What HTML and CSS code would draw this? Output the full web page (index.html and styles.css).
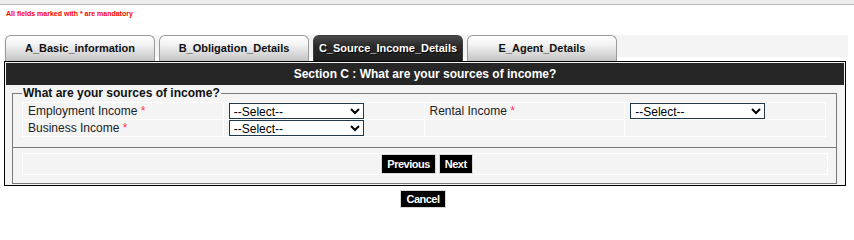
FILE: index.html
```html
<!DOCTYPE html>
<html>
<head>
<meta charset="utf-8">
<link rel="stylesheet" href="styles.css">
</head>
<body>
<div class="topbar"></div>
<div class="notice">All fields marked with * are mandatory</div>
<div class="tabs">
  <div class="tab">A_Basic_information</div>
  <div class="tab">B_Obligation_Details</div>
  <div class="tab active">C_Source_Income_Details</div>
  <div class="tab">E_Agent_Details</div>
</div>
<div class="panel">
  <div class="panel-head">Section C : What are your sources of income?</div>
  <div class="panel-body">
    <fieldset class="group">
      <legend>What are your sources of income?</legend>
      <table class="grid">
        <tr>
          <td class="lbl">Employment Income <span class="req">*</span></td>
          <td><select class="sel"><option>--Select--</option></select></td>
          <td class="lbl">Rental Income <span class="req">*</span></td>
          <td><select class="sel"><option>--Select--</option></select></td>
        </tr>
        <tr>
          <td class="lbl">Business Income <span class="req">*</span></td>
          <td><select class="sel"><option>--Select--</option></select></td>
          <td></td>
          <td></td>
        </tr>
      </table>
    </fieldset>
    <div class="nav-box">
      <div class="nav-inner">
        <button class="btn">Previous</button>
        <button class="btn">Next</button>
      </div>
    </div>
  </div>
</div>
<div class="cancel-row"><button class="btn cancel">Cancel</button></div>
</body>
</html>
```
FILE: styles.css
```css
html, body {
  margin: 0;
  padding: 0;
  background: #fff;
  font-family: "Liberation Sans", Arial, sans-serif;
}
.topbar {
  height: 4px;
  background: #ededed;
  border-bottom: 1px solid #b8b8b8;
}
.notice {
  font-size: 7px;
  font-weight: bold;
  color: #ff0000;
  padding-left: 6px;
  margin-top: 4px;
  height: 10px;
  line-height: 10px;
}
.tabs {
  display: flex;
  gap: 4px;
  margin: 16px 6px 0 4px;
  padding-left: 1px;
  height: 26px;
  background: linear-gradient(#f4f4f4 22px, #fff 22px);
}
.tab {
  box-sizing: border-box;
  width: 150px;
  height: 26px;
  border: 1px solid #9a9a9a;
  border-bottom: none;
  border-radius: 6px 6px 0 0;
  background: linear-gradient(#ffffff 0%, #f2f2f2 35%, #c4c4c4 100%);
  font-size: 11px;
  font-weight: bold;
  color: #111;
  text-align: center;
  line-height: 24px;
}
.tab.active {
  background: linear-gradient(#4a4a4a 0%, #2a2a2a 40%, #1e1e1e 100%);
  border-color: #3a3a3a;
  color: #fff;
  text-shadow: 1px 1px 0 #000;
}
.panel {
  margin: 0 8px 0 4px;
  border: 1px solid #000;
  padding: 1px;
  background: #f4f4f4;
}
.panel-head {
  background: #262626;
  color: #fff;
  font-weight: bold;
  font-size: 12px;
  text-align: center;
  height: 22px;
  line-height: 22px;
}
.panel-body {
  padding: 1px 7px 0 6px;
}
.group {
  margin: 0;
  padding: 2px 10px 10px 9px;
  border: 1px solid #7a7a7a;
  border-bottom: none;
}
.group legend {
  font-size: 12px;
  font-weight: bold;
  color: #111;
  padding: 0 1px;
  line-height: 14px;
}
.grid {
  width: 100%;
  border-collapse: collapse;
  table-layout: fixed;
}
.grid td {
  border: 1px solid #fff;
  height: 15px;
  padding: 0 5px;
  font-size: 12px;
  color: #222;
  vertical-align: middle;
}
.req {
  color: #ff3366;
}
.sel {
  box-sizing: border-box;
  width: 135px;
  height: 16px;
  border: 1px solid #21394d;
  border-radius: 0;
  background: #fff;
  font-family: "Liberation Sans", Arial, sans-serif;
  font-size: 12px;
  color: #000;
  padding: 0;
  display: block;
}
.nav-box {
  border: 1px solid #7a7a7a;
  padding: 5px 8px 8px 9px;
}
.nav-inner {
  border: 1px solid #fff;
  display: flex;
  justify-content: center;
  gap: 3px;
  padding-left: 4px;
}
.btn {
  background: #000;
  color: #fff;
  border: 1px solid #d8d8d8;
  font-family: "Liberation Sans Narrow", "Liberation Sans", Arial, sans-serif;
  font-stretch: condensed;
  font-weight: bold;
  font-size: 11px;
  letter-spacing: -0.5px;
  height: 20px;
  padding: 0 5px;
  margin: 0;
}
.cancel-row {
  display: flex;
  justify-content: center;
  padding-top: 4px;
  padding-right: 8px;
}
.cancel {
  height: 18px;
  padding: 0 5px;
}
```
